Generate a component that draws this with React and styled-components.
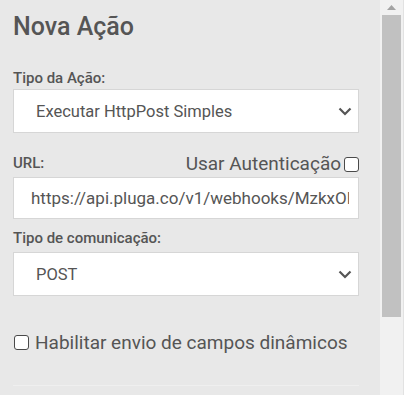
import React from "react";
import styled, { createGlobalStyle } from "styled-components";

const Global = createGlobalStyle`
  body {
    margin: 0;
    background: #fff;
    font-family: Roboto, "Liberation Sans", sans-serif;
  }
`;

const Frame = styled.div`
  display: flex;
  width: 407px;
  height: 395px;
`;

const Panel = styled.div`
  width: 381px;
  box-sizing: border-box;
  padding: 13px 21px 0 13px;
  background: #e8e8e8;
  overflow: hidden;
  display: flex;
  flex-direction: column;
  color: #555;
`;

const Title = styled.h2`
  margin: 0;
  font-size: 25px;
  line-height: 28px;
  font-weight: 500;
  color: #555;
`;

const Label = styled.label`
  display: block;
  font-size: 15px;
  line-height: 20px;
  font-weight: 500;
  margin-top: ${(p) => p.$top || 0}px;
`;

const LabelRow = styled.div`
  display: flex;
  justify-content: space-between;
  align-items: baseline;
  margin-top: ${(p) => p.$top || 0}px;
  height: 22px;
`;

const AuthToggle = styled.span`
  display: flex;
  align-items: center;
  gap: 3px;
  font-size: 19px;
  line-height: 22px;
  align-self: flex-end;
`;

const Box = styled.span`
  display: inline-block;
  flex: none;
  width: 13px;
  height: 13px;
  border: 1.3px solid #4a4a4a;
  border-radius: 3px;
  background: #fff;
`;

const Field = styled.div`
  height: ${(p) => p.$h || 47}px;
  margin-top: ${(p) => p.$top ?? 3}px;
  box-sizing: border-box;
  border: 1px solid #d6d6d6;
  background: #fff;
  display: flex;
  align-items: center;
  justify-content: space-between;
  padding: 0 6px 0 22px;
  font-size: 16.5px;
`;

const TextInput = styled.input`
  display: block;
  width: 100%;
  height: 45px;
  margin-top: 2px;
  box-sizing: border-box;
  border: 1px solid #d6d6d6;
  background: #fff;
  padding: 0 9px 0 17px;
  font-family: Roboto, "Liberation Sans", sans-serif;
  font-size: 17px;
  color: #555;
  outline: none;
`;

const CheckRow = styled.div`
  display: flex;
  align-items: center;
  gap: 6px;
  margin-top: 36px;
  font-size: 19px;
  line-height: 22px;
  padding-left: 1px;
`;

const Divider = styled.div`
  margin-top: 31px;
  border-top: 1px solid #efefef;
  height: 10px;
`;

const Track = styled.div`
  width: 23px;
  background: #f1f1f1;
  display: flex;
  flex-direction: column;
  align-items: center;
`;

const ArrowBtn = styled.div`
  height: 15px;
  display: flex;
  align-items: center;
  justify-content: center;
`;

const Thumb = styled.div`
  width: 19px;
  height: 302px;
  background: #c1c1c1;
`;

const Edge = styled.div`
  width: 3px;
  border-left: 1px solid #e2e2e2;
  background: #fff;
`;

const Chevron = () => (
  <svg width="14" height="9" viewBox="0 0 14 9">
    <path d="M1.5 1.5 L7 7 L12.5 1.5" fill="none" stroke="#555" strokeWidth="2.2" />
  </svg>
);

export default function App() {
  return (
    <>
      <Global />
      <Frame>
        <Panel>
          <Title>Nova Ação</Title>
          <Label $top={27}>Tipo da Ação:</Label>
          <Field $top={1}>
            Executar HttpPost Simples
            <Chevron />
          </Field>
          <LabelRow $top={20}>
            <Label>URL:</Label>
            <AuthToggle>
              Usar Autenticação <Box />
            </AuthToggle>
          </LabelRow>
          <TextInput readOnly value="https://api.pluga.co/v1/webhooks/MzkxODQ1NjQ" />
          <Label $top={9}>Tipo de comunicação:</Label>
          <Field $h={46} $top={4}>
            POST
            <Chevron />
          </Field>
          <CheckRow>
            <Box />
            Habilitar envio de campos dinâmicos
          </CheckRow>
          <Divider />
        </Panel>
        <Track>
          <ArrowBtn>
            <svg width="9" height="5" viewBox="0 0 9 5">
              <path d="M0 5 L4.5 0 L9 5 Z" fill="#a3a3a3" />
            </svg>
          </ArrowBtn>
          <Thumb />
        </Track>
        <Edge />
      </Frame>
    </>
  );
}
